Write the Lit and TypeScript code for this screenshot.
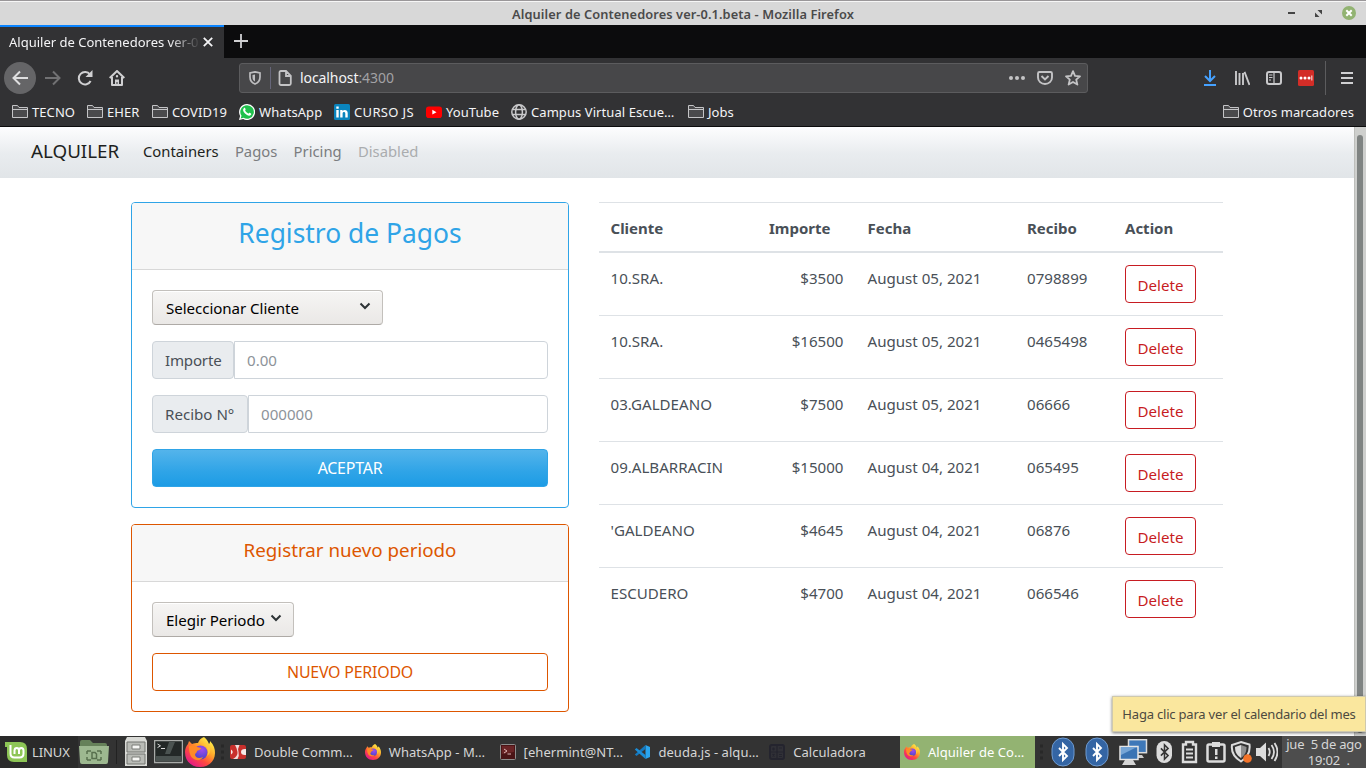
import { LitElement, html, css, svg } from "lit";
import { customElement } from "lit/decorators.js";

const folder = html`<svg class="i16" viewBox="0 0 16 16"><path d="M.5 13.5V1.5h5l1.5 2h8.5v10zM.5 5.5h15" fill="#4a4a4c" stroke="#c4c4c6"/></svg>`;

const firefoxShape = svg`
  <defs>
    <linearGradient id="fa" x1=".85" y1=".1" x2=".2" y2=".95"><stop offset="0" stop-color="#fff14a"/><stop offset=".35" stop-color="#ffa52a"/><stop offset=".65" stop-color="#ff4a3e"/><stop offset="1" stop-color="#e3168c"/></linearGradient>
    <radialGradient id="fb" cx=".6" cy=".3" r=".7"><stop offset="0" stop-color="#a14bef"/><stop offset="1" stop-color="#4a46c8"/></radialGradient>
  </defs>
  <path d="M19 0c3 2 4 5 5 7 1-1 1-2 1-3 4 4 5 8 5 12 0 8-6 14-15 14S0 24 0 15c0-3 1-6 3-8l1-3 3 3c2-1 4-1 6-1 1-3 3-5 6-6z" fill="url(#fa)"/>
  <circle cx="15.500" cy="15.500" r="7" fill="url(#fb)"/>
  <path d="M4 9c3-1 6 0 8 1l4 1c0 2-3 2-4 3 0 2-2 2-2 4 1 3 4 4 8 2-2 5-11 4-13-3-1-3-1-5-1-8z" fill="#ff8a26"/>
  <path d="M19 7c4 3 5 8 3 12 3-2 4-5 3-9-1-3-4-5-6-3z" fill="#ffc93a"/>`;
const firefox = html`<svg class="i16" viewBox="0 0 30 30">${firefoxShape}</svg>`;

const rune = "M-4-4L4 4L0 8V-8L4-4L-4 4";

const chevron = html`<svg class="chev" viewBox="0 0 12 8"><path d="M1.500 1.500L6 6 10.500 1.500" fill="none" stroke="#2e3436" stroke-width="2"/></svg>`;

const bookmarks = [
  ["TECNO", folder],
  ["EHER", folder],
  ["COVID19", folder],
  ["WhatsApp", html`<svg class="i16" viewBox="0 0 16 16"><path d="M8 0a8 8 0 1 1-3.800 15L0 16l1.100-4A8 8 0 0 1 8 0z" fill="#fff"/><path d="M8 1.200a6.800 6.800 0 1 1-3.500 12.600L1.700 14.500l.8-2.700A6.800 6.800 0 0 1 8 1.200z" fill="#20c04c"/><path d="M5 4c.8-.5 1.300.2 1.600 1.300.1.600-.7.900-.4 1.300.7 1.300 1.600 2.200 3 2.900.6.300.9-.9 1.400-.7 1.700.6 2 1.200 1.400 2-1.600 1.700-4 .6-6-1.300C4 7.500 3.400 5.300 5 4z" fill="#fff"/></svg>`],
  ["CURSO JS", html`<svg class="i16" viewBox="0 0 16 16"><rect width="16" height="16" rx="1.500" fill="#0a84bd"/><path d="M2.300 6h2.400v7.600H2.300zM2.300 2.500h2.400v2.200H2.300zM6.200 6h2.300v1C10 5.200 13.700 5.500 13.700 9v4.600h-2.400V9.500c0-2-2.700-2-2.700 0v4.100H6.200z" fill="#fff"/></svg>`],
  ["YouTube", html`<svg class="i16" viewBox="0 0 16 16"><rect y="2.500" width="16" height="11.500" rx="2.800" fill="#f00"/><path d="M6.300 5.800l4.200 2.400-4.200 2.400z" fill="#fff"/></svg>`],
  ["Campus Virtual Escue…", html`<svg class="i16" viewBox="0 0 16 16"><g fill="none" stroke="#c9c9cb" stroke-width="1.500"><circle cx="8" cy="8" r="7.200"/><ellipse cx="8" cy="8" rx="3.400" ry="7.200"/><path d="M1.500 5.500h13M1.500 10.500h13"/></g></svg>`],
  ["Jobs", folder],
];

const rows = [
  ["10.SRA.", "$3500", "August 05, 2021", "0798899"],
  ["10.SRA.", "$16500", "August 05, 2021", "0465498"],
  ["03.GALDEANO", "$7500", "August 05, 2021", "06666"],
  ["09.ALBARRACIN", "$15000", "August 04, 2021", "065495"],
  ["'GALDEANO", "$4645", "August 04, 2021", "06876"],
  ["ESCUDERO", "$4700", "August 04, 2021", "066546"],
];

@customElement("browser-chrome")
class BrowserChrome extends LitElement {
  static styles = css`
    :host { display: block; font: 13px/18px "Noto Sans", sans-serif; color: #f4f4f6; }
    svg { display: block; flex: none; }
    .i16 { width: 16px; height: 16px; }
    .title { box-sizing: border-box; height: 25px; background: #d8d8d8; border-top: 1px solid #9a9799; box-shadow: inset 0 1px #f6f6f6; display: grid; grid-template-columns: 1fr auto 1fr; align-items: center; padding-top: 2px; color: #4a4a4a; font-weight: 600; font-size: 12.800px; letter-spacing: .09px; }
    .win { display: flex; justify-content: flex-end; align-items: center; padding-right: 10px; gap: 20px; margin-top: -2px; }
    .tabs { height: 33px; background: #0c0c0d; display: flex; align-items: center; }
    .tab { box-sizing: border-box; width: 224px; height: 33px; background: #323234; border-top: 2px solid #0a84ff; display: flex; align-items: center; padding: 0 11px 2px 9px; }
    .tab span { flex: 1; white-space: nowrap; -webkit-mask: linear-gradient(90deg, #000 160px, transparent 192px); mask: linear-gradient(90deg, #000 160px, transparent 192px); }
    .plus { margin: -1px 0 0 10px; }
    .tools { height: 41px; background: #323234; display: flex; align-items: center; box-sizing: border-box; padding: 0 11px 2px 4px; }
    .back { width: 32px; height: 32px; border-radius: 50%; background: #656567; display: grid; place-items: center; margin-right: -7px; }
    .nav { display: flex; gap: 16px; align-items: center; width: 235px; }
    .url { box-sizing: border-box; width: 849px; height: 30px; border: 1px solid #5c5c5e; border-radius: 3px; background: #474749; display: flex; align-items: center; padding: 0 6px 0 7px; font-size: 14px; letter-spacing: -.08px; }
    .url .sep { width: 1px; height: 22px; background: #66667a; margin: 0 6px 0 7px; }
    .url .txt { margin-left: 7px; flex: 1; }
    .dim { color: #a2a2a5; }
    .acts { display: flex; gap: 12px; align-items: center; }
    .ext { display: flex; gap: 16px; margin-left: 114px; align-items: center; }
    .vr { width: 1px; height: 34px; background: #5c5c5e; margin: 0 13px 0 11px; }
    .marks { box-sizing: border-box; height: 28px; padding: 0 12px 2px; background: #323234; border-bottom: 1px solid #0c0c0d; display: grid; grid-template-columns: 75px 65px 87px 95px 92px 85px 177px 1fr auto; align-items: center; letter-spacing: .07px; }
    .mark { display: flex; gap: 4px; align-items: center; white-space: nowrap; }
    .mark:nth-child(5) { letter-spacing: .35px; }
  `;
  render() {
    return html`
      <div class="title"><span></span><span>Alquiler de Contenedores ver-0.1.beta - Mozilla Firefox</span>
        <div class="win">
          <svg width="7" height="2"><rect width="7" height="2" fill="#444"/></svg>
          <svg width="7" height="7" viewBox="0 0 7 7"><path d="M2.500 0H7v4.500zM0 2.500V7h4.500z" fill="#444"/></svg>
          <svg width="14" height="14" viewBox="0 0 14 14"><circle cx="7" cy="7" r="7" fill="#92b372"/><path d="M4.300 4.300l5.400 5.400M9.700 4.300l-5.400 5.400" stroke="#fff" stroke-width="2"/></svg>
        </div>
      </div>
      <div class="tabs">
        <div class="tab"><span>Alquiler de Contenedores ver-0</span>
          <svg width="10" height="10" viewBox="0 0 10 10"><path d="M.8.8l8.400 8.400M9.200.8L.8 9.200" stroke="#f4f4f6" stroke-width="1.800"/></svg></div>
        <svg class="plus" width="14" height="14" viewBox="0 0 14 14"><path d="M7 0v14M0 7h14" stroke="#d0d0d2" stroke-width="1.800"/></svg>
      </div>
      <div class="tools">
        <div class="nav">
          <div class="back"><svg class="i16" viewBox="0 0 16 16"><path d="M8 1.500L1.500 8 8 14.500M1.500 8H16" fill="none" stroke="#dededf" stroke-width="2"/></svg></div>
          <svg class="i16" viewBox="0 0 16 16"><path d="M8 1.500L14.500 8 8 14.500M14.500 8H0" fill="none" stroke="#717173" stroke-width="2"/></svg>
          <svg class="i16" viewBox="0 0 16 16"><path d="M13 4.500A6.200 6.200 0 1 0 13.600 11" fill="none" stroke="#d0d0d2" stroke-width="2"/><path d="M15.500 0v7h-7z" fill="#d0d0d2"/></svg>
          <svg class="i16" viewBox="0 0 16 16"><path d="M.7 8L8 1l7.300 7M3 7v8h10V7" fill="none" stroke="#d0d0d2" stroke-width="2" stroke-linejoin="round"/><path d="M6 15V9.500h4V15H8.500v-3h-1v3zM8 5a1.200 1.200 0 1 1 0 2.400A1.200 1.200 0 0 1 8 5z" fill="#d0d0d2"/></svg>
        </div>
        <div class="url">
          <svg class="i16" viewBox="0 0 16 16"><path d="M8 1.800l5 1.200v4c0 4-2.500 6-5 7-2.500-1-5-3-5-7V3z" fill="none" stroke="#bebec0" stroke-width="1.700"/><path d="M8 4.500v7C6 10.500 5.500 9 5.500 7V5z" fill="#bebec0"/></svg>
          <span class="sep"></span>
          <svg class="i16" viewBox="0 0 16 16"><path d="M2.500 2.500q0-1.500 1.500-1.500h5l4.800 4.800V13.500q0 1.500-1.500 1.500H4q-1.500 0-1.500-1.500zM9 1v5h5" fill="none" stroke="#c4c4c6" stroke-width="1.800"/></svg>
          <span class="txt">localhost<span class="dim">:4300</span></span>
          <div class="acts">
            <svg class="i16" viewBox="0 0 16 16" fill="#c4c4c6"><circle cx="2" cy="8" r="2"/><circle cx="8" cy="8" r="2"/><circle cx="14" cy="8" r="2"/></svg>
            <svg class="i16" viewBox="0 0 16 16"><path d="M2.500 2h11q1.500 0 1.500 1.500V7.500a7 6.500 0 0 1-14 0V3.500Q1 2 2.500 2zM4.500 6L8 9.500 11.500 6" fill="none" stroke="#c4c4c6" stroke-width="1.900"/></svg>
            <svg class="i16" viewBox="0 0 16 16"><path d="M8 1.200l2 4.600 5 .5-3.800 3.300 1.200 5L8 12l-4.400 2.600 1.200-5L1 6.300l5-.5z" fill="none" stroke="#c4c4c6" stroke-width="1.800" stroke-linejoin="round"/></svg>
          </div>
        </div>
        <div class="ext">
          <svg class="i16" viewBox="0 0 16 16"><path d="M8 0v11M3 6l5 5 5-5M2 15h12" fill="none" stroke="#45a1ff" stroke-width="2"/></svg>
          <svg class="i16" viewBox="0 0 16 16"><path d="M2 1v14M5.500 3v12M9 3v12M10.500 1.800L15.500 15" fill="none" stroke="#c9c9cb" stroke-width="1.900"/></svg>
          <svg class="i16" viewBox="0 0 16 16"><rect x="1" y="2" width="14" height="12" rx="2" fill="none" stroke="#c9c9cb" stroke-width="2"/><path d="M8 2v12M3 5h3.500M3 7.500h3.500M3 10h2" stroke="#c9c9cb" stroke-width="1.200"/></svg>
          <svg class="i16" viewBox="0 0 16 16"><rect width="16" height="16" rx="1.500" fill="#d32d27"/><g fill="#fff"><circle cx="3" cy="8" r="1.500"/><circle cx="7" cy="8" r="1.500"/><circle cx="11" cy="8" r="1.500"/><path d="M13.400 5.500h.9v5h-.9z"/></g></svg>
        </div>
        <span class="vr"></span>
        <svg class="i16" viewBox="0 0 16 16"><path d="M2 3h12M2 8h12M2 13h12" stroke="#d0d0d2" stroke-width="2"/></svg>
      </div>
      <div class="marks">
        ${bookmarks.map(([t, i]) => html`<div class="mark">${i}<span>${t}</span></div>`)}
        <div class="mark">${folder}<span>Otros marcadores</span></div>
      </div>`;
  }
}

@customElement("rental-page")
class RentalPage extends LitElement {
  static styles = css`
    :host { display: grid; grid-template-columns: 1fr 12px; height: 609px; background: #fff; color: #495057; font: 15.100px/24px "Noto Sans", sans-serif; overflow: hidden; }
    .menu { height: 51px; box-sizing: border-box; padding: 0 31px 3px; background: linear-gradient(#fdfdfe, #e9ecef 52%, #e1e5e8); display: flex; align-items: center; color: #7b7d80; }
    .brand { font-size: 18.800px; color: #1d1f20; width: 112px; }
    .on { color: #1d1f20; }
    .off { color: #aaacae; }
    .links { display: flex; gap: 16.300px; font-size: 14.800px; }
    .content { display: grid; grid-template-columns: 438px 624px; gap: 30px; padding: 24px 0 0 131px; align-items: start; }
    .card { border: 1px solid #2fa4e7; border-radius: 4px; overflow: hidden; margin-bottom: 16px; box-sizing: border-box; }
    .head { box-sizing: border-box; background: #f7f7f7; border-bottom: 1px solid #d8d8d8; text-align: center; height: 67px; padding-top: 13px; color: #2fa4e7; font-size: 26.400px; line-height: 34px; }
    .body { padding: 20px; display: flex; flex-direction: column; gap: 16px; align-items: stretch; }
    .orange { border-color: #dd5600; }
    .orange .head { height: 57px; color: #dd5600; font-size: 18.750px; line-height: 24px; }
    .select { box-sizing: border-box; width: 231px; height: 35px; border: 1px solid #c3c0bc; border-bottom-color: #aeaaa6; border-radius: 4px; background: linear-gradient(#f6f5f4, #eae8e6); box-shadow: inset 0 1px #fff; color: #000; display: flex; justify-content: space-between; align-items: center; padding: 1px 11px 0 13px; letter-spacing: -.05px; }
    .small { width: 142px; }
    .chev { width: 12px; height: 8px; margin-top: -4px; }
    .group { display: flex; height: 38px; box-sizing: border-box; }
    .label, .input { border: 1px solid #ced4da; box-sizing: border-box; display: flex; align-items: center; padding: 0 12px; }
    .label { background: #e9ecef; border-radius: 4px; width: 82px; white-space: nowrap; letter-spacing: -.2px; }
    .wide { width: 96px; letter-spacing: 0; }
    .input { flex: 1; border-radius: 0 4px 4px 0; color: #8d9399; }
    .btn { box-sizing: border-box; height: 38px; border: 1px solid #2fa4e7; border-radius: 4px; display: grid; place-items: center; color: #fff; background: linear-gradient(#54b4eb, #2fa4e7 60%, #1d9ce5); font-size: 15.900px; letter-spacing: -.2px; }
    .plain { background: #fff; color: #dd5600; border-color: #dd5600; }
    .table { border-top: 1px solid #dee2e6; }
    .tr { display: grid; grid-template-columns: 158px 98.500px 159.500px 98px 110px; box-sizing: border-box; border-top: 1px solid #dee2e6; height: 63px; }
    .tr > * { padding: 12px 12px 0; }
    .tr > span { padding-top: 13px; }
    .tr > :first-child { padding-left: 11.500px; }
    .th { height: 50px; border-top: 0; border-bottom: 2px solid #dee2e6; font-weight: 700; font-size: 15px; }
    .th + .tr { border-top: 0; height: 62px; }
    .num { text-align: right; }
    .del { box-sizing: border-box; width: 71px; height: 38px; border: 1px solid #c71c22; border-radius: 4px; color: #c71c22; display: grid; place-items: center; padding-top: 2px; }
    .bar { background: #cecfcd; padding: 8px 3px 3px; box-shadow: inset 1px 0 #bdbebb; }
    .thumb { background: #7f8382; height: 598px; border-radius: 3px; }
  `;
  render() {
    return html`
      <div>
        <div class="menu"><span class="brand">ALQUILER</span><div class="links"><span class="on">Containers</span><span>Pagos</span><span>Pricing</span><span class="off">Disabled</span></div></div>
        <div class="content">
          <div>
            <div class="card"><div class="head">Registro de Pagos</div>
              <div class="body">
                <div class="select"><span>Seleccionar Cliente</span>${chevron}</div>
                <div class="group"><span class="label">Importe</span><span class="input">0.00</span></div>
                <div class="group"><span class="label wide">Recibo N°</span><span class="input">000000</span></div>
                <div class="btn">ACEPTAR</div>
              </div></div>
            <div class="card orange"><div class="head">Registrar nuevo periodo</div>
              <div class="body">
                <div class="select small"><span>Elegir Periodo</span>${chevron}</div>
                <div class="btn plain">NUEVO PERIODO</div>
              </div></div>
          </div>
          <div class="table">
            <div class="tr th"><span>Cliente</span><span>Importe</span><span>Fecha</span><span>Recibo</span><span>Action</span></div>
            ${rows.map(r => html`<div class="tr"><span>${r[0]}</span><span class="num">${r[1]}</span><span>${r[2]}</span><span>${r[3]}</span><div><div class="del">Delete</div></div></div>`)}
          </div>
        </div>
      </div>
      <div class="bar"><div class="thumb"></div></div>`;
  }
}

const blueTooth = html`<svg class="blue" width="24" height="30" viewBox="0 0 24 30"><rect x="1" y="1" width="22" height="28" rx="11" fill="#3465a4" stroke="#6f9bd0"/><path d=${rune} transform="translate(12 15)" fill="none" stroke="#fff" stroke-width="1.900"/></svg>`;

const tasks = [
  ["Double Comm…", html`<svg class="i16" viewBox="0 0 16 16"><rect y="1" width="16" height="14" rx="2" fill="#c8302c"/><path d="M5 1h4.500Q7.500 4.500 8.500 8t-1 7H3q5-3 4.500-7T5 1z" fill="#f2dcda"/><path d="M1 5.500q3.500 2.500 0 5zM16 5q-5-.5-5 3t5 3z" fill="#f5e8e6"/></svg>`],
  ["WhatsApp - M…", firefox],
  ["[ehermint@NT…", html`<svg class="i16" viewBox="0 0 16 16"><rect x=".5" y=".5" width="15" height="15" rx="1" fill="#4a1416" stroke="#8d8d8d"/><path d="M2 2h12v6L2 10z" fill="#6a2426"/><path d="M4 5l3 2-3 2M7.500 10H11" fill="none" stroke="#e0b8b8"/></svg>`],
  ["deuda.js - alqu…", html`<svg class="i16" viewBox="0 0 16 16"><path d="M11.500 1L16 3v10l-4.500 2z" fill="#2aa5ef"/><path d="M11.500 1v4L2.500 12 .8 10.500z" fill="#1478be"/><path d="M11.500 15v-4L2.500 4 .8 5.500z" fill="#1b8cd6"/></svg>`],
  ["Calculadora", html`<svg class="i16" viewBox="0 0 16 16"><rect x="1" y="1" width="14" height="14" rx="2" fill="#303036" stroke="#24242e" stroke-width="2"/><path d="M8 2v12M2 8h12M3 5h3M4.500 3.500v3M10 4h3M10 10.500h3M10 12.500h3M3.500 10l2 2.500M5.500 10l-2 2.500" stroke="#24242e" stroke-width="1.200"/></svg>`],
  ["Alquiler de Co…", firefox],
];

@customElement("task-bar")
class TaskBar extends LitElement {
  static styles = css`
    :host { display: flex; height: 32px; background: #333; color: #d6d6d6; font: 13px/18px "Noto Sans", sans-serif; }
    svg { display: block; flex: none; }
    .i16 { width: 16px; height: 16px; }
    .start { width: 78px; box-sizing: border-box; padding-left: 5px; background: #2a2a2a; display: flex; gap: 5px; align-items: center; letter-spacing: -.1px; }
    .quick { width: 148px; display: flex; align-items: center; }
    .vr { width: 1px; height: 24px; background: #222; margin: 0 8px 0 6px; }
    .term { margin: 0 2px 0 7px; }
    .dots { margin-left: 6px; }
    .tasks { display: grid; grid-template-columns: repeat(5, 134.800px) 135px; }
    .task { display: flex; align-items: center; gap: 8px; padding-left: 4px; white-space: nowrap; letter-spacing: .05px; }
    .task:last-child { background: #93b372; color: #fff; }
    .tray { flex: 1; display: flex; align-items: center; padding-left: 4px; }
    .tray svg { margin-right: 8px; }
    .tray .blue { margin-right: 10px; }
    .tray .warn { margin-right: 4px; }
    .tray .shield { margin-right: 3px; }
    .tray .vol { margin: 0; }
    .clock { width: 84px; background: #4d4d4d; line-height: 16px; text-align: center; white-space: pre; letter-spacing: -.2px; }
  `;
  render() {
    return html`
      <div class="start"><svg width="22" height="22" viewBox="0 0 22 22"><path d="M0 1h15q7 0 7 7v13H9q-7 0-7-7V6H0z" fill="#8dc556"/><path d="M5.500 4v8.500q0 4 4 4h5q4 0 4-4V9.500q0-2.500-2.200-2.500T14 9.500V13M14 9.500Q14 7 11.800 7T9.500 9.500V13" fill="none" stroke="#fff" stroke-width="2"/></svg><span>LINUX</span></div>
      <div class="quick">
        <svg width="32" height="26" viewBox="0 0 32 26"><path d="M2 8V3q0-2 2-2h8l3 3h12q2 0 2 2v3z" fill="#66815a"/><path d="M1 7h30l-1 16q0 2-2 2H4q-2 0-2-2z" fill="#9db890"/><path d="M9 12h4M9 12v3M9 21h4M9 21v-3M23 12h-4M23 12v3M23 21h-4M23 21v-3M14 13.500h3l1.500 1.500v4.500H14z" fill="none" stroke="#58704e" stroke-width="1.500"/></svg>
        <span class="vr"></span>
        <svg width="22" height="30" viewBox="0 0 22 30"><path d="M2 0h18l2 4v25H0V4z" fill="#d9dad6"/><path d="M2 5h18v10H2zM2 17h18v10H2z" fill="#b9bbb6" stroke="#747672"/><path d="M7 8h8v4H7zM7 20h8v4H7z" fill="#f6f6f4" stroke="#7a7c78"/></svg>
        <svg class="term" width="29" height="24" viewBox="0 0 29 24"><rect x=".5" y=".5" width="28" height="22" fill="#232827" stroke="#a9aba9" stroke-width="1.500"/><path d="M15 2h6l-5 12h-5zM2 16h25v5H2z" fill="#4b5351"/><path d="M3.500 4l3 1.800-3 1.800M7 8.500h4" fill="none" stroke="#ddd"/></svg>
        <svg width="30" height="30" viewBox="0 0 30 30">${firefoxShape}</svg>
        <svg class="dots" width="4" height="16"><path d="M0 2h3M0 8h3M0 14h3" stroke="#282828" stroke-width="3"/></svg>
      </div>
      <div class="tasks">${tasks.map(([t, i]) => html`<div class="task">${i}<span>${t}</span></div>`)}</div>
      <div class="tray">
        <svg width="4" height="16"><path d="M1 2h3M1 8h3M1 14h3" stroke="#282828" stroke-width="3"/></svg>
        ${blueTooth}${blueTooth}
        <svg width="29" height="27" viewBox="0 0 29 27"><rect x="9.500" y=".7" width="18" height="13" fill="#3f78b8" stroke="#dcdcdc" stroke-width="1.500"/><path d="M15 16h8l2 3h-8z" fill="#ccc"/><rect x="1" y="7.500" width="18" height="13" fill="#3b74b4" stroke="#e6e6e6" stroke-width="1.500"/><path d="M2 8h16L2 16z" fill="#76a5d6"/><path d="M6 21h8l3 5H3z" fill="#d4d4d4"/></svg>
        <svg width="17" height="24" viewBox="0 0 17 24"><rect x=".5" y="1" width="15.500" height="22" rx="7.700" fill="#dcdcdc"/><path d=${rune} transform="translate(8.500 12) scale(.9)" fill="none" stroke="#333" stroke-width="1.700"/></svg>
        <svg width="17" height="24" viewBox="0 0 17 24"><path d="M2 4.500h3V2h7v2.500h3V22H2z" fill="none" stroke="#dcdcdc" stroke-width="2.400"/><path d="M5 9.500h7M5 13.500h7M5 17.500h7" stroke="#dcdcdc" stroke-width="2"/></svg>
        <svg class="warn" width="20" height="24" viewBox="0 0 20 24"><rect x="1.500" y="4.500" width="17" height="17" rx="1.500" fill="none" stroke="#dcdcdc" stroke-width="2.500"/><path d="M6 2h8v5H6zM9 9h2.500v6H9zM9 16.500h2.500V19H9z" fill="#dcdcdc"/></svg>
        <svg class="shield" width="23" height="24" viewBox="0 0 23 24"><path d="M11 2l8.500 2.500c1 8-2 13-8.500 17C4.500 17.500 1 12 2 5z" fill="none" stroke="#dcdcdc" stroke-width="2"/><path d="M11 5v13C6.500 15 5 12 5 7z" fill="#dcdcdc"/><path d="M11 5l5.500 2c0 4-1 8-5.500 11z" fill="#8e8e8e"/><circle cx="17.500" cy="18.500" r="4.300" fill="#f37329"/></svg>
        <svg class="vol" width="22" height="22" viewBox="0 0 22 22"><path d="M0 7h4l6-5.500v19L4 15H0z" fill="#dcdcdc"/><path d="M12.500 7q2.500 4 0 8M15.500 4q5 7 0 14M18.500 2q6 9 0 18" fill="none" stroke="#dcdcdc" stroke-width="1.800"/></svg>
      </div>
      <div class="clock"><div>jue  5 de ago</div><div>   19:02  .</div></div>`;
  }
}

@customElement("app-root")
class AppRoot extends LitElement {
  static styles = css`
    :host { display: block; position: relative; width: 1366px; height: 768px; overflow: hidden; }
    .tip { position: absolute; right: 0; top: 696px; width: 254px; height: 36px; box-sizing: border-box; border: 1px solid #cfc9ad; background: #fae79e; box-shadow: 0 1px 3px #0008; color: #4d4a40; font: 13px/34px "Noto Sans", sans-serif; text-align: center; white-space: nowrap; letter-spacing: -.2px; }
  `;
  render() {
    return html`<browser-chrome></browser-chrome><rental-page></rental-page><task-bar></task-bar><div class="tip">Haga clic para ver el calendario del mes</div>`;
  }
}
